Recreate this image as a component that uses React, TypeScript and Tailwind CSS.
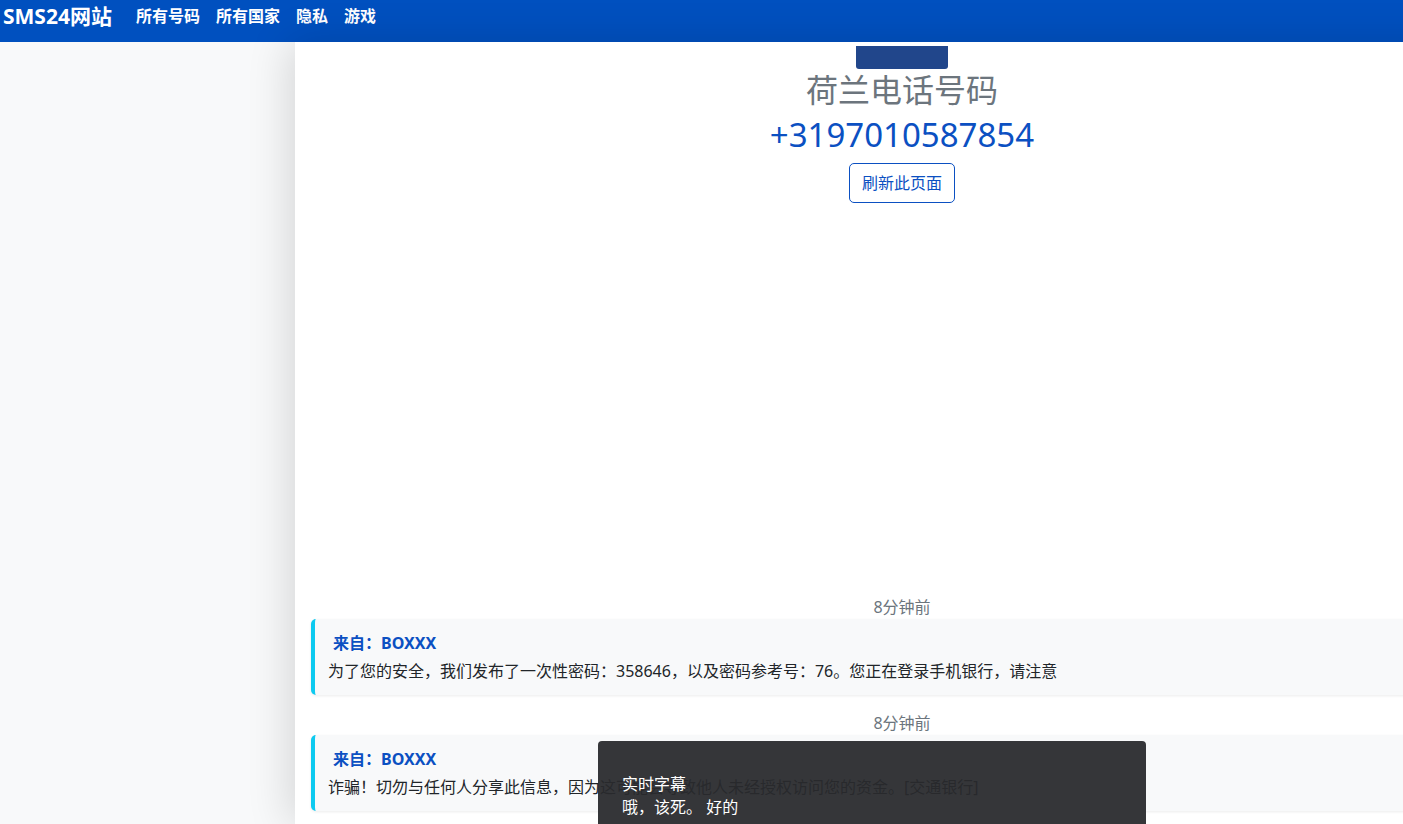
import React from "react";

const font = { fontFamily: '"Noto Sans", "Noto Sans CJK SC", sans-serif' };

function Message({ time, from, text }: { time: string; from: string; text: string }) {
  return (
    <div>
      <div className="text-center text-[16px] leading-[24px] text-[#6c757d]">{time}</div>
      <div className="mb-4 rounded-[5px] border-l-[4px] border-[#0dcaf0] bg-[#f8f9fa] py-3 pl-[13px] shadow-[0_1px_3px_rgba(0,0,0,0.08)]">
        <div className="pl-[5px] text-[16px] font-bold leading-[24px] text-[#0b50c2]">来自：{from}</div>
        <div className="mt-1 text-[16px] leading-[24px] text-[#212529]">{text}</div>
      </div>
    </div>
  );
}

export default function App() {
  return (
    <div className="relative h-[824px] w-[1403px] overflow-hidden bg-white" style={font}>
      <nav className="flex h-[42px] items-start gap-4 bg-[#0050bf] pl-[3px] pt-[2px] text-white">
        <span className="text-[21px] font-bold leading-[28px]">SMS24网站</span>
        <div className="ml-[8px] flex gap-4 pt-[2px] text-[16px] font-bold leading-[24px]">
          <span>所有号码</span>
          <span>所有国家</span>
          <span>隐私</span>
          <span>游戏</span>
        </div>
      </nav>
      <div className="flex h-[782px]">
        <aside className="h-full w-[295px] shrink-0 bg-[#f8f9fa]" />
        <main className="relative h-full w-[1214px] shrink-0 bg-white px-4 shadow-[-6px_0_40px_rgba(0,0,0,0.14)]">
          <div className="flex flex-col items-center">
            <div className="mt-[4px] h-[23px] w-[92px] rounded-b-[3px] bg-[#21468b]" />
            <h1 className="mt-[1px] text-[32px] leading-[40px] text-[#6c757d]">荷兰电话号码</h1>
            <div className="mt-[3px] text-[33px] leading-[44px] text-[#0b50c2]">+3197010587854</div>
            <button className="mt-[6px] h-[40px] rounded-[5px] border border-[#0b50c2] px-3 text-[16px] text-[#0b50c2]">
              刷新此页面
            </button>
          </div>
          <div className="mt-[392px]">
            <Message
              time="8分钟前"
              from="BOXXX"
              text="为了您的安全，我们发布了一次性密码：358646，以及密码参考号：76。您正在登录手机银行，请注意"
            />
            <Message
              time="8分钟前"
              from="BOXXX"
              text="诈骗！切勿与任何人分享此信息，因为这可能会导致他人未经授权访问您的资金。[交通银行]"
            />
          </div>
        </main>
      </div>
      <div className="absolute left-[598px] top-[741px] h-[100px] w-[548px] rounded-t-[4px] bg-[rgba(40,41,45,0.94)] px-6 pt-[32px] text-[16px] leading-[23px] text-white">
        <div>实时字幕</div>
        <div>哦，该死。 好的</div>
      </div>
    </div>
  );
}
